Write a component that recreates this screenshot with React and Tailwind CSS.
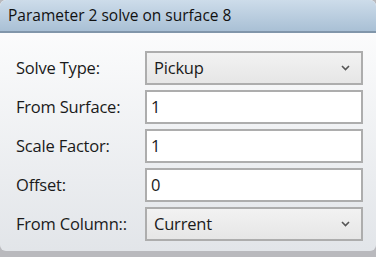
import React from 'react';

const font = { fontFamily: '"Open Sans", "Noto Sans", sans-serif' };

function Chevron() {
  return (
    <svg width="9" height="6" viewBox="0 0 9 6" className="text-[#555]">
      <path d="M1 1 L4.5 4.5 L8 1" fill="none" stroke="currentColor" strokeWidth="1.6" />
    </svg>
  );
}

function Row({ label, children }) {
  return (
    <div className="flex items-center h-[34px]">
      <div className="w-[145px] pl-4 text-[16.5px] text-[#1a1a1a] tracking-[-0.2px]">{label}</div>
      {children}
    </div>
  );
}

function Select({ value }) {
  return (
    <div className="w-[218px] h-[34px] border-2 border-[#adadad] bg-gradient-to-b from-[#f2f2f2] to-[#e6e6e6] flex items-center justify-between pl-[7px] pr-[11px] text-[16.5px] text-[#1a1a1a] tracking-[-0.2px]">
      <span>{value}</span>
      <Chevron />
    </div>
  );
}

function Input({ value }) {
  return (
    <div className="w-[218px] h-[34px] border-2 border-[#adadad] bg-white flex items-center pl-[4px] text-[16.5px] text-[#1a1a1a]">
      {value}
    </div>
  );
}

export default function App() {
  return (
    <div className="w-[376px] h-[257px] bg-[#b9b9bd]" style={font}>
      <div className="w-[376px] h-[251px] rounded-[6px] overflow-hidden flex flex-col bg-gradient-to-b from-white to-[#e2e5e9]">
        <div className="h-[33px] shrink-0 bg-gradient-to-b from-[#cddcea] to-[#a9c0d5] border-b-2 border-[#8196aa] flex items-center pl-2 text-[15.5px] text-[#111]">
          Parameter 2 solve on surface 8
        </div>
        <div className="flex flex-col gap-[5px] pt-[18px]">
          <Row label="Solve Type:"><Select value="Pickup" /></Row>
          <Row label="From Surface:"><Input value="1" /></Row>
          <Row label="Scale Factor:"><Input value="1" /></Row>
          <Row label="Offset:"><Input value="0" /></Row>
          <Row label="From Column::"><Select value="Current" /></Row>
        </div>
      </div>
    </div>
  );
}
